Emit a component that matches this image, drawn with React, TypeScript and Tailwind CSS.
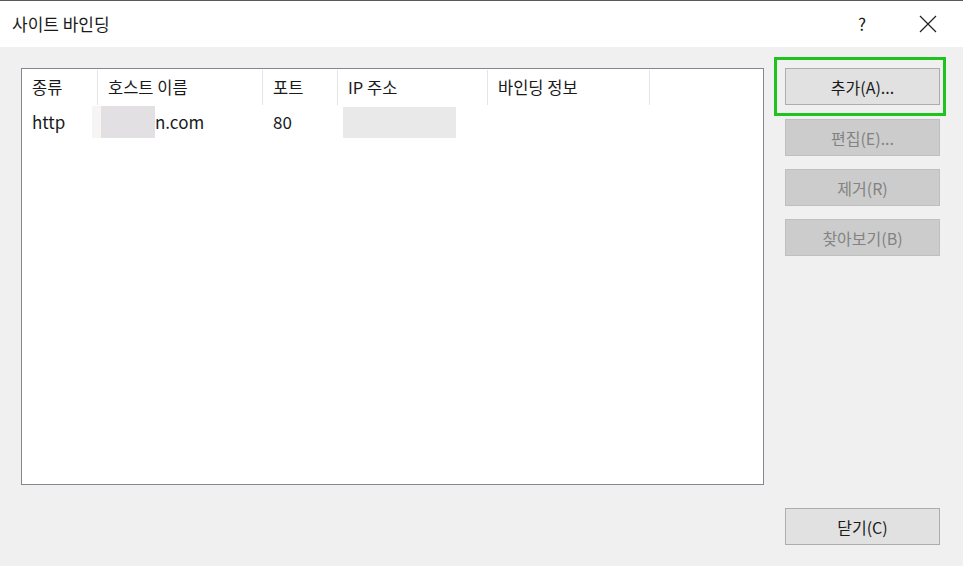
export default function App() {
  const font = { fontFamily: '"Noto Sans CJK KR", "Noto Sans", sans-serif' };
  const cols = [
    { label: "종류", w: "w-[76px]" },
    { label: "호스트 이름", w: "w-[165px]" },
    { label: "포트", w: "w-[75px]" },
    { label: "IP 주소", w: "w-[150px]" },
    { label: "바인딩 정보", w: "w-[162px]" },
  ];
  const btn = "w-[155px] h-[37px] border flex items-center justify-center text-[16px]";
  const disabled = `${btn} bg-[#cccccc] border-[#bfbfbf] text-[#838383]`;
  return (
    <div className="w-[963px] h-[566px] bg-[#f0f0f0] border-t border-[#5a5a5a] flex flex-col text-[#1a1a1a]" style={font}>
      <div className="h-[46px] bg-white flex items-center pl-[12px] shrink-0">
        <span className="text-[17px]">사이트 바인딩</span>
        <div className="ml-auto flex items-center">
          <span className="text-[17px] mr-[53px]">?</span>
          <svg width="18" height="18" viewBox="0 0 18 18" className="mr-[26px]">
            <path d="M1 1L17 17M17 1L1 17" stroke="#222" strokeWidth="1.2" />
          </svg>
        </div>
      </div>
      <div className="flex flex-1 pt-[21px] pl-[21px] pb-[21px]">
        <div className="w-[743px] h-[417px] bg-white border border-[#828790] shrink-0">
          <div className="flex h-[36px] pt-[1px]">
            {cols.map((c) => (
              <div key={c.label} className={`${c.w} border-r border-[#e5e5e5] pl-[10px] flex items-center text-[16.5px]`}>
                {c.label}
              </div>
            ))}
          </div>
          <div className="flex h-[34px] items-center text-[17px]">
            <div className="w-[76px] pl-[10px]">http</div>
            <div className="w-[165px] flex items-center">
              <div className="w-[9px] h-[32px] bg-[#f7f5f3] ml-[-6px]" />
              <div className="w-[54px] h-[32px] bg-[#e2e0e2]" />
              <span>n.com</span>
            </div>
            <div className="w-[75px] pl-[10px]">80</div>
            <div className="w-[150px] flex">
              <div className="ml-[5px] w-[113px] h-[31px] bg-[#e9e9ea]" />
            </div>
          </div>
        </div>
        <div className="flex flex-col ml-[10px] w-[172px]">
          <div className="border-[3px] border-[#1ec31e] p-[8px] mt-[-11px]">
            <div className={`${btn} bg-[#e1e1e1] border-[#adadad]`}>추가(A)...</div>
          </div>
          <div className="pl-[11px] flex flex-col gap-[13px] mt-[3px]">
            <div className={disabled}>편집(E)...</div>
            <div className={disabled}>제거(R)</div>
            <div className={disabled}>찾아보기(B)</div>
          </div>
          <div className="mt-auto pl-[11px]">
            <div className={`${btn} bg-[#e1e1e1] border-[#adadad]`}>닫기(C)</div>
          </div>
        </div>
      </div>
    </div>
  );
}
